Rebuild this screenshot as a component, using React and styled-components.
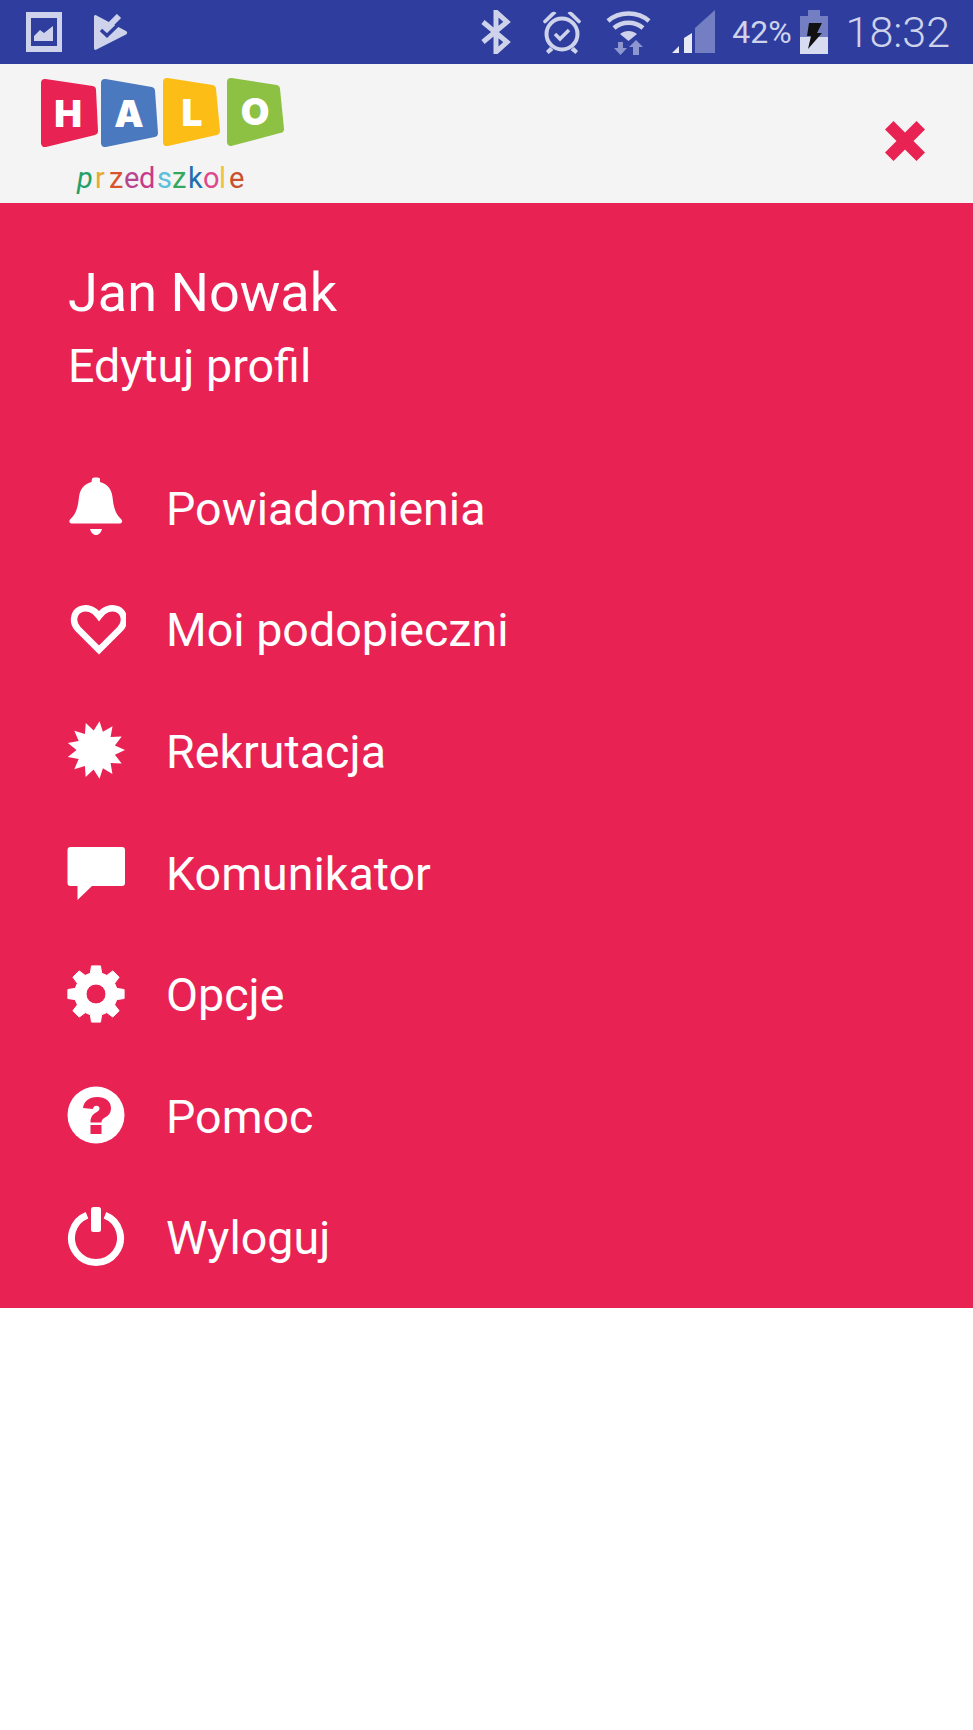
import React from 'react';
import styled, { createGlobalStyle } from 'styled-components';

const menuItems = [
  { label: 'Powiadomienia', icon: 'bell' },
  { label: 'Moi podopieczni', icon: 'heart' },
  { label: 'Rekrutacja', icon: 'burst' },
  { label: 'Komunikator', icon: 'chat' },
  { label: 'Opcje', icon: 'gear' },
  { label: 'Pomoc', icon: 'help' },
  { label: 'Wyloguj', icon: 'power' },
];

const logoTiles = [
  { points: '7,5 54,12 56,53 7,65', color: '#e92254' },
  { points: '67,5 113,13 116,55 67,65', color: '#4b79bf' },
  { points: '129,4 174,11 178,53 129,64', color: '#fdbd17' },
  { points: '193,4 238,11 242,51 193,64', color: '#8cc143' },
];

const logoLetters = [
  { char: 'H', x: 30, y: 49 },
  { char: 'A', x: 91, y: 49 },
  { char: 'L', x: 154, y: 48 },
  { char: 'O', x: 217, y: 47 },
];

const wordLetters = [
  { char: 'p', x: 39, color: '#25a066', slant: true },
  { char: 'r', x: 57, color: '#e6ab33' },
  { char: 'z', x: 71, color: '#d9532f' },
  { char: 'e', x: 86, color: '#b8458f' },
  { char: 'd', x: 101, color: '#c83a8c' },
  { char: 's', x: 119, color: '#5cc0dc' },
  { char: 'z', x: 134, color: '#35a85c' },
  { char: 'k', x: 150, color: '#1e6fb0' },
  { char: 'o', x: 165, color: '#dd4a8c' },
  { char: 'l', x: 181, color: '#efc43c' },
  { char: 'e', x: 191, color: '#c9502d' },
];

const burstPoints = () => {
  const pts = [];
  for (let i = 0; i < 26; i++) {
    const a = ((i * 360) / 26 - 90 + 7) * (Math.PI / 180);
    const r = i % 2 === 0 ? 29 : 19.5;
    pts.push(`${(30 + r * Math.cos(a)).toFixed(1)},${(30 + r * Math.sin(a)).toFixed(1)}`);
  }
  return pts.join(' ');
};

const gearPath = () => {
  let d = '';
  const teeth = 8;
  for (let i = 0; i < teeth; i++) {
    const c = (i * 360) / teeth - 90;
    const pts = [
      [21.5, c - 15],
      [28.5, c - 9],
      [28.5, c + 9],
      [21.5, c + 15],
    ];
    pts.forEach(([r, deg], j) => {
      const a = (deg * Math.PI) / 180;
      d += `${i === 0 && j === 0 ? 'M' : 'L'}${(30 + r * Math.cos(a)).toFixed(1)} ${(30 + r * Math.sin(a)).toFixed(1)} `;
    });
  }
  return `${d}Z M30 20a10 10 0 1 0 0 20a10 10 0 1 0 0-20Z`;
};

const MenuIcon = ({ name }) => {
  switch (name) {
    case 'bell':
      return (
        <IconSvg viewBox="0 0 60 60">
          <path d="M26 2c0-1 1-1.500 4-1.500s4 .5 4 1.500v3c8 2 11.500 7.500 12.500 15 1 9 2.500 16.500 8 21.500 1.500 1.500 2 2.500 1.500 3.500-.5 1-1.500 1.500-3 1.500H6.500c-1.500 0-2.500-.5-3-1.500-.5-1 0-2 1.500-3.500 5.500-5 7-12.500 8-21.500 1-7.500 4.500-13 12.500-15z" fill="#fff" />
          <path d="M24 52h12c-1 3.500-3 6-6 6s-5-2.500-6-6z" fill="#fff" />
        </IconSvg>
      );
    case 'heart':
      return (
        <IconSvg viewBox="-3 0 60 60">
          <path d="M30 51 9 30C3 24 4 14 11 10.500c6.500-3 14-.5 19 6.500 5-7 12.500-9.500 19-6.500 7 3.500 8 13.500 2 19.500z" fill="none" stroke="#fff" strokeWidth="6.500" strokeLinejoin="miter" />
        </IconSvg>
      );
    case 'burst':
      return (
        <IconSvg viewBox="0 0 60 60">
          <polygon points={burstPoints()} fill="#fff" />
        </IconSvg>
      );
    case 'chat':
      return (
        <IconSvg viewBox="0 -2 60 60">
          <path d="M4.500 3h51.500a3 3 0 0 1 3 3v33a3 3 0 0 1-3 3H26L11.500 56V42H4.500a3 3 0 0 1-3-3V6a3 3 0 0 1 3-3z" fill="#fff" />
        </IconSvg>
      );
    case 'gear':
      return (
        <IconSvg viewBox="0 0 60 60">
          <path d={gearPath()} fill="#fff" fillRule="evenodd" stroke="#fff" strokeWidth="1" strokeLinejoin="round" />
        </IconSvg>
      );
    case 'help':
      return (
        <IconSvg viewBox="0 0 60 60">
          <circle cx="30" cy="30" r="28.500" fill="#fff" />
          <path d="M17 23c1-7 6-11 14-11 8.500 0 14 4.500 14 11 0 5-2.500 7.500-6 9.500-2.500 1.500-3.500 2.500-3.500 5h-11c0-5.500 2-8 5.500-10 2.500-1.500 3.500-2.500 3.500-4 0-1.800-1.200-2.800-3-2.800-2 0-3.200 1.200-3.700 3.300z" fill="#e92254" />
          <rect x="24.500" y="40" width="11" height="9" fill="#e92254" />
        </IconSvg>
      );
    case 'power':
      return (
        <IconSvg viewBox="0 0 60 60">
          <path d="M21 8.200A24.500 24.500 0 1 0 39 8.200" fill="none" stroke="#fff" strokeWidth="7" />
          <rect x="25" y="0" width="10" height="25" rx="2.500" fill="#fff" />
        </IconSvg>
      );
    default:
      return null;
  }
};

const Logo = () => (
  <LogoSvg viewBox="0 0 250 120">
    {logoTiles.map((tile) => (
      <polygon key={tile.color} points={tile.points} fill={tile.color} stroke={tile.color} strokeWidth="8" strokeLinejoin="round" />
    ))}
    {logoLetters.map((letter) => (
      <LogoLetter key={letter.char} x={letter.x} y={letter.y}>{letter.char}</LogoLetter>
    ))}
    <LogoWord y="110">
      {wordLetters.map((letter) => (
        <tspan key={letter.x} x={letter.x} fill={letter.color} fontStyle={letter.slant ? 'italic' : 'normal'}>
          {letter.char}
        </tspan>
      ))}
    </LogoWord>
  </LogoSvg>
);

export default function App() {
  return (
    <>
      <GlobalStyle />
      <Page>
        <StatusBar>
          <LeftIcons>
            <svg width="36" height="40" viewBox="0 0 36 40">
              <path d="M0 0h36v40H0zM5 6v28h26V6z" fill="#ced3eb" fillRule="evenodd" />
              <path d="M8 29v-5l6-6 4 3 9-7v15z" fill="#ced3eb" />
            </svg>
            <svg width="34" height="37" viewBox="0 0 34 37">
              <path d="M0 3c0-1.500 1-2.500 2.500-1.500L32 17c1.500 1 1.500 2.500 0 3.500L2.500 35.500C1 36.500 0 35.500 0 34z" fill="#ced3eb" />
              <path d="M15 12 25 2" fill="none" stroke="#ced3eb" strokeWidth="6" />
              <path d="M7 16l6 5.500L28 7" fill="none" stroke="#2f3e9e" strokeWidth="3.500" />
            </svg>
          </LeftIcons>
          <RightIcons>
            <svg width="30" height="44" viewBox="0 0 30 44">
              <path d="M2 12l24 20-11 10V2l11 10L2 32" fill="none" stroke="#ced3eb" strokeWidth="5" />
            </svg>
            <StatusSvg $gap={31} width="40" height="43" viewBox="0 0 40 43">
              <circle cx="20" cy="23" r="15.500" fill="none" stroke="#ced3eb" strokeWidth="4" />
              <path d="M13 23l5 5 9-9" fill="none" stroke="#ced3eb" strokeWidth="3.500" />
              <path d="M1 10 9 2c2-2 4-1.500 5.500 0L4 12c-1.500 1-2.500 0-3-2zM39 10 31 2c-2-2-4-1.500-5.500 0L36 12c1.500 1 2.500 0 3-2z" fill="#ced3eb" />
              <path d="M8 36l-4 4 2.500 3 5-4zM32 36l4 4-2.500 3-5-4z" fill="#ced3eb" />
            </StatusSvg>
            <StatusSvg $gap={24} width="45" height="46" viewBox="0 0 45 46">
              <path d="M2 12C13 2 32 2 43 12" fill="none" stroke="#ced3eb" strokeWidth="4.500" />
              <path d="M8 19c8-7 21-7 29 0" fill="none" stroke="#ced3eb" strokeWidth="4.500" />
              <path d="M14 25c5-4 12-4 17 0l-8.500 7z" fill="#ced3eb" />
              <path d="M12 33h5v6h4l-6.500 7L8 39h4z" fill="#8d96cf" />
              <path d="M30 31l7 7h-4v8h-6v-8h-4z" fill="#8d96cf" />
            </StatusSvg>
            <StatusSvg $gap={21} width="44" height="44" viewBox="0 0 44 44">
              <path d="M23 18 43 0v43H23z" fill="#737fc2" />
              <path d="M0 43 7 36v7zM12 28l8-5v20h-8z" fill="#e7e9f5" />
            </StatusSvg>
            <Percent>42%</Percent>
            <StatusSvg $gap={8} width="28" height="44" viewBox="0 0 28 44">
              <path d="M8 0h12v6h8v21H0V6h8z" fill="#737fc2" />
              <path d="M0 27h28v17H0z" fill="#d8dcf0" />
              <path d="M9 13h13l-5 10h5L8 39l3-13H7z" fill="#111" />
            </StatusSvg>
            <Clock>18:32</Clock>
          </RightIcons>
        </StatusBar>
        <Header>
          <Logo />
          <CloseIcon viewBox="0 0 40 40">
            <path d="M8.500 0 20 11.500 31.500 0 40 8.500 28.500 20 40 31.500 31.500 40 20 28.500 8.500 40 0 31.500 11.500 20 0 8.500z" fill="#e92254" />
          </CloseIcon>
        </Header>
        <Drawer>
          <Profile>
            <UserName>Jan Nowak</UserName>
            <EditLink>Edytuj profil</EditLink>
          </Profile>
          <Menu>
            {menuItems.map((item) => (
              <MenuRow key={item.label}>
                <MenuIcon name={item.icon} />
                <MenuLabel>{item.label}</MenuLabel>
              </MenuRow>
            ))}
          </Menu>
        </Drawer>
      </Page>
    </>
  );
}

const GlobalStyle = createGlobalStyle`
  html, body {
    margin: 0;
    padding: 0;
    background: #fff;
    font-family: Roboto, "Liberation Sans", sans-serif;
  }
`;

const Page = styled.div`
  width: 973px;
  height: 1730px;
  background: #fff;
  overflow: hidden;
`;

const StatusBar = styled.div`
  height: 64px;
  background: #2f3e9e;
  display: flex;
  align-items: center;
  justify-content: space-between;
  padding: 0 23px 0 26px;
`;

const LeftIcons = styled.div`
  display: flex;
  align-items: center;
  gap: 32px;
`;

const RightIcons = styled.div`
  display: flex;
  align-items: center;
`;

const StatusSvg = styled.svg`
  margin-left: ${(props) => props.$gap}px;
`;

const Percent = styled.span`
  font-size: 32px;
  color: #ced3eb;
  margin-left: 16px;
`;

const Clock = styled.span`
  font-size: 43px;
  font-weight: 300;
  color: #ced3eb;
  margin-left: 18px;
`;

const Header = styled.div`
  height: 139px;
  box-sizing: border-box;
  background: #f4f4f5;
  display: flex;
  align-items: flex-start;
  justify-content: space-between;
  padding: 14px 48px 0 38px;
`;

const LogoSvg = styled.svg`
  width: 250px;
  height: 120px;
`;

const LogoLetter = styled.text`
  font-family: Inter, "Liberation Sans", sans-serif;
  font-size: 37px;
  font-weight: 900;
  fill: #fff;
  text-anchor: middle;
`;

const LogoWord = styled.text`
  font-family: Roboto, "Liberation Sans", sans-serif;
  font-size: 29px;
`;

const CloseIcon = styled.svg`
  width: 40px;
  height: 40px;
  margin-top: 43px;
`;

const Drawer = styled.div`
  height: 1105px;
  background: #e92254;
  padding: 60px 0 0 68px;
  box-sizing: border-box;
`;

const Profile = styled.div`
  display: flex;
  flex-direction: column;
`;

const UserName = styled.div`
  font-size: 54px;
  line-height: 60px;
  color: #fff;
`;

const EditLink = styled.div`
  font-size: 46.6px;
  line-height: 52px;
  margin-top: 17px;
  color: #fff;
`;

const Menu = styled.div`
  display: flex;
  flex-direction: column;
  margin-top: 56px;
`;

const MenuRow = styled.div`
  height: 121.6px;
  display: flex;
  align-items: center;
  gap: 40px;
`;

const IconSvg = styled.svg`
  width: 60px;
  height: 60px;
  margin-left: -2px;
  margin-top: -3px;
  flex: none;
`;

const MenuLabel = styled.span`
  font-size: 46.6px;
  color: #fff;
`;
